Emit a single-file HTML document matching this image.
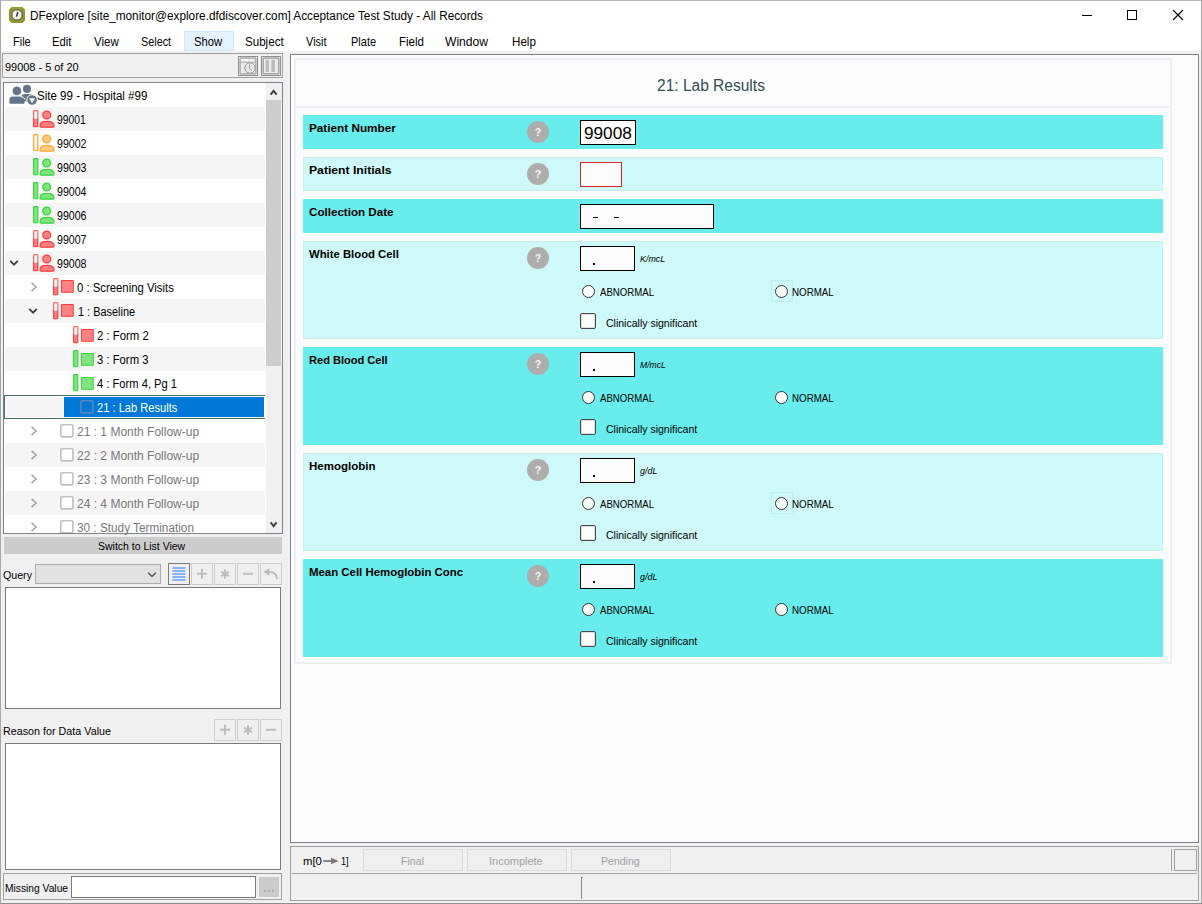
<!DOCTYPE html>
<html><head><meta charset="utf-8"><title>DFexplore</title>
<style>
*{box-sizing:border-box;margin:0;padding:0}
html,body{width:1202px;height:904px;overflow:hidden;background:#f0f0f0}
body{font-family:"Liberation Sans",sans-serif;font-size:12px;color:#000;position:relative}
.a{position:absolute}
.t{position:absolute;white-space:nowrap;display:inline-block;transform-origin:0 50%}
svg{position:absolute;overflow:visible}
.ta{position:absolute;background:#fff;border:1px solid #7a7a7a}
.rowd{position:absolute;left:303px;width:860px;background:#68ecec}
.rowl{position:absolute;left:303px;width:860px;background:#cff8f8;border:1px solid #c4efef}
.help{position:absolute;left:527px;width:22px;height:22px;border-radius:11px;background:#adadad;color:#f4f4f4;font-weight:700;font-size:10.5px;line-height:23.5px;text-align:center}
.nb{position:absolute;left:580px;width:55px;height:25px;background:#fcfcfc;border:1px solid #000}
.dot{position:absolute;left:593px;width:2px;height:2px;background:#000}
.rad{position:absolute;width:13px;height:13px;border-radius:7px;border:1px solid #333;background:#fcfcfc}
.cb{position:absolute;left:580px;width:16px;height:16px;border:1px solid #4a4a4a;border-radius:2px;background:#fcfcfc;box-shadow:inset 0 0 0 1px #dcdcdc}

.gb{position:absolute;width:22px;height:22px;border:1px solid #cecece;background:#efefef}
.sb{position:absolute;top:849px;height:22px;border:1px solid #dcdcdc;background:#efefef}
.alt{position:absolute;left:5px;width:260px;height:24px;background:#f5f5f5}

</style></head><body>
<div class="a" style="left:0px;top:0px;width:1202px;height:30px;background:#fff"></div>
<div class="a" style="left:0px;top:30px;width:1202px;height:21px;background:#fff"></div>
<svg style="left:9px;top:7px" width="16" height="16" viewBox="0 0 16 16"><path d="M2.4 0 H13.6 L16 2.4 V13.6 L13.6 16 H2.4 L0 13.6 V2.4 Z" fill="#95952a" stroke="#95952a" stroke-width="1.2" stroke-linejoin="round" transform="translate(0.6 0.6) scale(0.925)"/><path d="M3.2 1.2 H12.8" stroke="#a9a948" stroke-width="1"/><circle cx="8" cy="7.9" r="5.3" fill="#f4f3de" stroke="#3c4768" stroke-width="0.9"/><g fill="#55608a"><circle cx="8" cy="3.5" r="0.5"/><circle cx="8" cy="12.3" r="0.5"/><circle cx="3.6" cy="7.9" r="0.5"/><circle cx="12.4" cy="7.9" r="0.5"/><circle cx="4.9" cy="4.8" r="0.4"/><circle cx="11.1" cy="4.8" r="0.4"/><circle cx="4.9" cy="11" r="0.4"/><circle cx="11.1" cy="11" r="0.4"/></g><path d="M8.9 5 L7.5 9.6" stroke="#2a3350" stroke-width="1.5" fill="none"/></svg>
<svg style="left:1080px;top:5px" width="110" height="20" viewBox="0 0 110 20" fill="none" stroke="#000" stroke-width="1"><path d="M2 10.5 H12"/><rect x="47.5" y="5.5" width="9" height="9"/><path d="M93 5 L103 15 M103 5 L93 15" stroke-width="1.1"/></svg>
<div class="a" style="left:184px;top:31px;width:50px;height:20px;background:#e5f3ff;border:1px solid #cce8ff"></div>
<div class="a" style="left:2px;top:53px;width:281px;height:25px;border:1px solid #a0a0a0;background:#f0f0f0"></div>
<svg style="left:238px;top:56px" width="20" height="20" viewBox="0 0 20 20">
<rect x="0.5" y="0.5" width="19" height="19" fill="#c6c6c6" stroke="#8f8f8f"/>
<rect x="2.5" y="2.5" width="15" height="15" fill="#ececec" stroke="#b4b4b4"/>
<path d="M3 3.8 H5 M6.8 3.8 H10 M11.8 3.8 H15" stroke="#fff" stroke-width="1.4"/>
<path d="M2 6.2 H18" stroke="#a8a8a8" stroke-width="1"/>
<circle cx="12" cy="12" r="5.2" fill="#e6e6e6" stroke="#9a9a9a" stroke-width="1"/>
<path d="M11.6 8.6 V12.4 L14 14.6" stroke="#9a9a9a" stroke-width="1" fill="none"/>
<rect x="1" y="1" width="1" height="1" fill="#fff"/><rect x="18" y="1" width="1" height="1" fill="#fff"/><rect x="1" y="18" width="1" height="1" fill="#fff"/><rect x="18" y="18" width="1" height="1" fill="#fff"/>
</svg>
<svg style="left:261px;top:56px" width="20" height="20" viewBox="0 0 20 20">
<rect x="0.5" y="0.5" width="19" height="19" fill="#c6c6c6" stroke="#8f8f8f"/>
<rect x="2.5" y="2.5" width="15" height="15" fill="#ececec" stroke="#a8a8a8"/>
<rect x="4.6" y="4" width="3.4" height="12" fill="#bcbcbc"/>
<rect x="10.4" y="4" width="3.6" height="12" fill="#bcbcbc"/>
<rect x="1" y="1" width="1" height="1" fill="#fff"/><rect x="18" y="1" width="1" height="1" fill="#fff"/><rect x="1" y="18" width="1" height="1" fill="#fff"/><rect x="18" y="18" width="1" height="1" fill="#fff"/>
</svg>
<div class="a" style="left:3px;top:82px;width:280px;height:452px;border:1px solid #7c838d;background:#fff"></div>
<div class="alt" style="top:107px;height:24px"></div>
<div class="alt" style="top:155px;height:24px"></div>
<div class="alt" style="top:203px;height:24px"></div>
<div class="alt" style="top:251px;height:24px"></div>
<div class="alt" style="top:299px;height:24px"></div>
<div class="alt" style="top:347px;height:24px"></div>
<div class="alt" style="top:395px;height:24px"></div>
<div class="alt" style="top:443px;height:24px"></div>
<div class="alt" style="top:491px;height:24px"></div>
<div class="a" style="left:4px;top:395px;width:261px;height:24px;background:#fff;border:1px solid #466e6e;border-right:none"></div>
<div class="a" style="left:6px;top:397px;width:57px;height:20px;background:#f5f5f5"></div>
<div class="a" style="left:64px;top:397px;width:200px;height:20px;background:#0078d7"></div>
<div class="a" style="left:266px;top:83px;width:16px;height:450px;background:#f0f0f0"></div>
<div class="a" style="left:266px;top:100px;width:15px;height:266px;background:#cdcdcd"></div>
<svg style="left:266px;top:83px" width="16" height="17" viewBox="0 0 16 17"><path d="M4.6 11.6 L7.6 7.8 L10.6 11.6" stroke="#404040" stroke-width="2" fill="none"/></svg>
<svg style="left:266px;top:516px" width="16" height="17" viewBox="0 0 16 17"><path d="M4.6 6.4 L7.6 10.2 L10.6 6.4" stroke="#404040" stroke-width="2" fill="none"/></svg>
<svg style="left:9px;top:84px" width="29" height="22" viewBox="0 0 29 22" fill="#64758a">
<circle cx="18" cy="4.9" r="4.05"/>
<path d="M12 12.4 Q13 10.1 16 10.1 H21 Q22.6 10.2 23.4 11 L18.4 17.4 H15 Z"/>
<path d="M11 11.2 L16.6 15.4" stroke="#fff" stroke-width="1" fill="none"/>
<circle cx="7.9" cy="6.95" r="4.4"/>
<path d="M0.4 19 V16 Q0.4 12.6 3.8 12.6 H11.2 L15.4 15.7 V19 Q15.4 19.7 14.7 19.7 H1.1 Q0.4 19.7 0.4 19 Z"/>
<circle cx="23.1" cy="16" r="5.7" fill="#fff"/>
<circle cx="23.1" cy="16" r="4.85"/>
<path d="M20.1 14.2 H26.1 L23.1 19.2 Z" fill="#fff"/>
</svg>
<svg style="left:33.3px;top:110.3px" width="5.4" height="17.4" viewBox="0 0 5.4 17.4"><rect x="0.6" y="0.6" width="4.2" height="16.2" rx="0.9" fill="#ff8282" stroke="#ff3a3a" stroke-width="1.15"/><rect x="1.5" y="1.5" width="2.4" height="7.4" fill="#fff" fill-opacity="0.95"/><rect x="0.3" y="0.3" width="4.8" height="8" rx="1" fill="#fff" fill-opacity="0.35"/></svg>
<svg style="left:39.4px;top:110.0px" width="16" height="18" viewBox="0 0 16 18"><circle cx="7.7" cy="4.95" r="3.95" fill="#ff8282" stroke="#ff3a3a" stroke-width="1.25"/><path d="M1 16 C1 12.4 3.6 11.3 8 11.3 C12.4 11.3 15 12.4 15 16 Q15 17.15 13.9 17.15 H2.1 Q1 17.15 1 16 Z" fill="#ff8282" stroke="#ff3a3a" stroke-width="1.25"/></svg>
<svg style="left:33.3px;top:134.3px" width="5.4" height="17.4" viewBox="0 0 5.4 17.4"><rect x="0.6" y="0.6" width="4.2" height="16.2" rx="0.9" fill="#ffcb80" stroke="#ffa630" stroke-width="1.15"/><rect x="1.5" y="1.5" width="2.4" height="14.4" fill="#fff" fill-opacity="0.95"/></svg>
<svg style="left:39.4px;top:134.0px" width="16" height="18" viewBox="0 0 16 18"><circle cx="7.7" cy="4.95" r="3.95" fill="#ffcb80" stroke="#ffa630" stroke-width="1.25"/><path d="M1 16 C1 12.4 3.6 11.3 8 11.3 C12.4 11.3 15 12.4 15 16 Q15 17.15 13.9 17.15 H2.1 Q1 17.15 1 16 Z" fill="#ffcb80" stroke="#ffa630" stroke-width="1.25"/></svg>
<svg style="left:33.3px;top:158.3px" width="5.4" height="17.4" viewBox="0 0 5.4 17.4"><rect x="0.6" y="0.6" width="4.2" height="16.2" rx="0.9" fill="#80e280" stroke="#36d836" stroke-width="1.15"/></svg>
<svg style="left:39.4px;top:158.0px" width="16" height="18" viewBox="0 0 16 18"><circle cx="7.7" cy="4.95" r="3.95" fill="#80e280" stroke="#36d836" stroke-width="1.25"/><path d="M1 16 C1 12.4 3.6 11.3 8 11.3 C12.4 11.3 15 12.4 15 16 Q15 17.15 13.9 17.15 H2.1 Q1 17.15 1 16 Z" fill="#80e280" stroke="#36d836" stroke-width="1.25"/></svg>
<svg style="left:33.3px;top:182.3px" width="5.4" height="17.4" viewBox="0 0 5.4 17.4"><rect x="0.6" y="0.6" width="4.2" height="16.2" rx="0.9" fill="#80e280" stroke="#36d836" stroke-width="1.15"/></svg>
<svg style="left:39.4px;top:182.0px" width="16" height="18" viewBox="0 0 16 18"><circle cx="7.7" cy="4.95" r="3.95" fill="#80e280" stroke="#36d836" stroke-width="1.25"/><path d="M1 16 C1 12.4 3.6 11.3 8 11.3 C12.4 11.3 15 12.4 15 16 Q15 17.15 13.9 17.15 H2.1 Q1 17.15 1 16 Z" fill="#80e280" stroke="#36d836" stroke-width="1.25"/></svg>
<svg style="left:33.3px;top:206.3px" width="5.4" height="17.4" viewBox="0 0 5.4 17.4"><rect x="0.6" y="0.6" width="4.2" height="16.2" rx="0.9" fill="#80e280" stroke="#36d836" stroke-width="1.15"/></svg>
<svg style="left:39.4px;top:206.0px" width="16" height="18" viewBox="0 0 16 18"><circle cx="7.7" cy="4.95" r="3.95" fill="#80e280" stroke="#36d836" stroke-width="1.25"/><path d="M1 16 C1 12.4 3.6 11.3 8 11.3 C12.4 11.3 15 12.4 15 16 Q15 17.15 13.9 17.15 H2.1 Q1 17.15 1 16 Z" fill="#80e280" stroke="#36d836" stroke-width="1.25"/></svg>
<svg style="left:33.3px;top:230.3px" width="5.4" height="17.4" viewBox="0 0 5.4 17.4"><rect x="0.6" y="0.6" width="4.2" height="16.2" rx="0.9" fill="#ff8282" stroke="#ff3a3a" stroke-width="1.15"/><rect x="1.5" y="1.5" width="2.4" height="7.4" fill="#fff" fill-opacity="0.95"/><rect x="0.3" y="0.3" width="4.8" height="8" rx="1" fill="#fff" fill-opacity="0.35"/></svg>
<svg style="left:39.4px;top:230.0px" width="16" height="18" viewBox="0 0 16 18"><circle cx="7.7" cy="4.95" r="3.95" fill="#ff8282" stroke="#ff3a3a" stroke-width="1.25"/><path d="M1 16 C1 12.4 3.6 11.3 8 11.3 C12.4 11.3 15 12.4 15 16 Q15 17.15 13.9 17.15 H2.1 Q1 17.15 1 16 Z" fill="#ff8282" stroke="#ff3a3a" stroke-width="1.25"/></svg>
<svg style="left:33.3px;top:254.3px" width="5.4" height="17.4" viewBox="0 0 5.4 17.4"><rect x="0.6" y="0.6" width="4.2" height="16.2" rx="0.9" fill="#ff8282" stroke="#ff3a3a" stroke-width="1.15"/><rect x="1.5" y="1.5" width="2.4" height="7.4" fill="#fff" fill-opacity="0.95"/><rect x="0.3" y="0.3" width="4.8" height="8" rx="1" fill="#fff" fill-opacity="0.35"/></svg>
<svg style="left:39.4px;top:254.0px" width="16" height="18" viewBox="0 0 16 18"><circle cx="7.7" cy="4.95" r="3.95" fill="#ff8282" stroke="#ff3a3a" stroke-width="1.25"/><path d="M1 16 C1 12.4 3.6 11.3 8 11.3 C12.4 11.3 15 12.4 15 16 Q15 17.15 13.9 17.15 H2.1 Q1 17.15 1 16 Z" fill="#ff8282" stroke="#ff3a3a" stroke-width="1.25"/></svg>
<svg style="left:53.3px;top:278.3px" width="5.4" height="17.4" viewBox="0 0 5.4 17.4"><rect x="0.6" y="0.6" width="4.2" height="16.2" rx="0.9" fill="#ff8282" stroke="#ff3a3a" stroke-width="1.15"/><rect x="1.5" y="1.5" width="2.4" height="7.4" fill="#fff" fill-opacity="0.95"/><rect x="0.3" y="0.3" width="4.8" height="8" rx="1" fill="#fff" fill-opacity="0.35"/></svg>
<svg style="left:60.5px;top:280.4px" width="13" height="13" viewBox="0 0 13 13"><rect x="0.5" y="0.5" width="11.8" height="11.8" rx="0.15" fill="#ff8282" stroke="#ff3a3a" stroke-width="1"/></svg>
<svg style="left:53.3px;top:302.3px" width="5.4" height="17.4" viewBox="0 0 5.4 17.4"><rect x="0.6" y="0.6" width="4.2" height="16.2" rx="0.9" fill="#ff8282" stroke="#ff3a3a" stroke-width="1.15"/><rect x="1.5" y="1.5" width="2.4" height="7.4" fill="#fff" fill-opacity="0.95"/><rect x="0.3" y="0.3" width="4.8" height="8" rx="1" fill="#fff" fill-opacity="0.35"/></svg>
<svg style="left:60.5px;top:304.4px" width="13" height="13" viewBox="0 0 13 13"><rect x="0.5" y="0.5" width="11.8" height="11.8" rx="0.15" fill="#ff8282" stroke="#ff3a3a" stroke-width="1"/></svg>
<svg style="left:73.3px;top:326.3px" width="5.4" height="17.4" viewBox="0 0 5.4 17.4"><rect x="0.6" y="0.6" width="4.2" height="16.2" rx="0.9" fill="#ff8282" stroke="#ff3a3a" stroke-width="1.15"/><rect x="1.5" y="1.5" width="2.4" height="7.4" fill="#fff" fill-opacity="0.95"/><rect x="0.3" y="0.3" width="4.8" height="8" rx="1" fill="#fff" fill-opacity="0.35"/></svg>
<svg style="left:80.6px;top:328.6px" width="13" height="13" viewBox="0 0 13 13"><rect x="0.5" y="0.5" width="11.8" height="11.8" rx="0.15" fill="#ff8282" stroke="#ff3a3a" stroke-width="1"/></svg>
<svg style="left:73.3px;top:350.3px" width="5.4" height="17.4" viewBox="0 0 5.4 17.4"><rect x="0.6" y="0.6" width="4.2" height="16.2" rx="0.9" fill="#80e280" stroke="#36d836" stroke-width="1.15"/></svg>
<svg style="left:80.6px;top:352.6px" width="13" height="13" viewBox="0 0 13 13"><rect x="0.5" y="0.5" width="11.8" height="11.8" rx="0.15" fill="#80e280" stroke="#36d836" stroke-width="1"/></svg>
<svg style="left:73.3px;top:374.3px" width="5.4" height="17.4" viewBox="0 0 5.4 17.4"><rect x="0.6" y="0.6" width="4.2" height="16.2" rx="0.9" fill="#80e280" stroke="#36d836" stroke-width="1.15"/></svg>
<svg style="left:80.6px;top:376.6px" width="13" height="13" viewBox="0 0 13 13"><rect x="0.5" y="0.5" width="11.8" height="11.8" rx="0.15" fill="#80e280" stroke="#36d836" stroke-width="1"/></svg>
<svg style="left:80.1px;top:400.1px" width="14" height="14" viewBox="0 0 14 14"><rect x="0.8" y="0.8" width="12.1" height="12.1" rx="1.3" fill="none" stroke="#5a86b6" stroke-width="1.6"/></svg>
<svg style="left:60.2px;top:424.0px" width="14" height="14" viewBox="0 0 14 14"><rect x="0.8" y="0.8" width="12.1" height="12.1" rx="1.3" fill="#fff" stroke="#bfbfbf" stroke-width="1.6"/></svg>
<svg style="left:60.2px;top:448.0px" width="14" height="14" viewBox="0 0 14 14"><rect x="0.8" y="0.8" width="12.1" height="12.1" rx="1.3" fill="#fff" stroke="#bfbfbf" stroke-width="1.6"/></svg>
<svg style="left:60.2px;top:472.0px" width="14" height="14" viewBox="0 0 14 14"><rect x="0.8" y="0.8" width="12.1" height="12.1" rx="1.3" fill="#fff" stroke="#bfbfbf" stroke-width="1.6"/></svg>
<svg style="left:60.2px;top:496.0px" width="14" height="14" viewBox="0 0 14 14"><rect x="0.8" y="0.8" width="12.1" height="12.1" rx="1.3" fill="#fff" stroke="#bfbfbf" stroke-width="1.6"/></svg>
<svg style="left:60.2px;top:520.0px" width="14" height="14" viewBox="0 0 14 14"><rect x="0.8" y="0.8" width="12.1" height="12.1" rx="1.3" fill="#fff" stroke="#bfbfbf" stroke-width="1.6"/></svg>
<svg style="left:7.6px;top:259.2px" width="12" height="8" viewBox="0 0 12 8"><path d="M2.2 1.8 L6 5.6 L9.8 1.8" stroke="#404040" stroke-width="1.9" fill="none"/></svg>
<svg style="left:30px;top:281.3px" width="8" height="12" viewBox="0 0 8 12"><path d="M1.6 1.8 L6 6 L1.6 10.2" stroke="#a6a6a6" stroke-width="1.6" fill="none"/></svg>
<svg style="left:27.299999999999997px;top:307.0px" width="12" height="8" viewBox="0 0 12 8"><path d="M2.2 1.8 L6 5.6 L9.8 1.8" stroke="#404040" stroke-width="1.9" fill="none"/></svg>
<svg style="left:30px;top:425.3px" width="8" height="12" viewBox="0 0 8 12"><path d="M1.6 1.8 L6 6 L1.6 10.2" stroke="#a6a6a6" stroke-width="1.6" fill="none"/></svg>
<svg style="left:30px;top:449.3px" width="8" height="12" viewBox="0 0 8 12"><path d="M1.6 1.8 L6 6 L1.6 10.2" stroke="#a6a6a6" stroke-width="1.6" fill="none"/></svg>
<svg style="left:30px;top:473.3px" width="8" height="12" viewBox="0 0 8 12"><path d="M1.6 1.8 L6 6 L1.6 10.2" stroke="#a6a6a6" stroke-width="1.6" fill="none"/></svg>
<svg style="left:30px;top:497.3px" width="8" height="12" viewBox="0 0 8 12"><path d="M1.6 1.8 L6 6 L1.6 10.2" stroke="#a6a6a6" stroke-width="1.6" fill="none"/></svg>
<svg style="left:30px;top:521.3px" width="8" height="12" viewBox="0 0 8 12"><path d="M1.6 1.8 L6 6 L1.6 10.2" stroke="#a6a6a6" stroke-width="1.6" fill="none"/></svg>
<div class="a" style="left:4px;top:533px;width:278px;height:1px;background:#7c838d"></div>
<div class="a" style="left:3px;top:534px;width:281px;height:3px;background:#f0f0f0"></div>
<div class="a" style="left:4px;top:537px;width:278px;height:17px;background:#cccccc"></div>
<div class="a" style="left:35px;top:564px;width:126px;height:20px;background:#e1e1e1;border:1px solid #adadad"></div>
<svg style="left:146px;top:570px" width="12" height="8" viewBox="0 0 12 8"><path d="M2.2 2.7 L6 6.4 L9.8 2.7" stroke="#404040" stroke-width="1.2" fill="none"/></svg>
<div class="a" style="left:168px;top:563px;width:22px;height:22px;border:1px solid #7a7a7a;background:#efefef"></div>
<svg style="left:168px;top:563px" width="22" height="22" viewBox="0 0 22 22"><path d="M4.5 5 H17.5 M4.5 8 H17.5 M4.5 11 H17.5 M4.5 14 H17.5 M4.5 17 H17.5" stroke="#86b4ff" stroke-width="1.9"/></svg>
<div class="gb" style="left:191px;top:563px"></div>
<svg style="left:191px;top:563px" width="22" height="22" viewBox="0 0 22 22"><path d="M6 10.8 H16 M11 5.8 V15.8" stroke="#bdbdbd" stroke-width="2"/></svg>
<div class="gb" style="left:214px;top:563px"></div>
<svg style="left:214px;top:563px" width="22" height="22" viewBox="0 0 22 22"><path d="M11 6.2 V15.6 M7.2 8.6 L14.8 13.2 M14.8 8.6 L7.2 13.2" stroke="#bdbdbd" stroke-width="2"/></svg>
<div class="gb" style="left:237px;top:563px"></div>
<svg style="left:237px;top:563px" width="22" height="22" viewBox="0 0 22 22"><path d="M6 10.8 H16" stroke="#bdbdbd" stroke-width="2"/></svg>
<div class="gb" style="left:260px;top:563px"></div>
<svg style="left:260px;top:563px" width="22" height="22" viewBox="0 0 22 22"><path d="M3.4 9 L9.4 5.2 V12.8 Z" fill="#bdbdbd"/><path d="M9 9 Q16.4 9 17.2 15.8" stroke="#bdbdbd" stroke-width="2.2" fill="none"/></svg>
<div class="ta" style="left:5px;top:587px;width:276px;height:122px"></div>
<div class="gb" style="left:214px;top:719px"></div>
<svg style="left:214px;top:719px" width="22" height="22" viewBox="0 0 22 22"><path d="M6 10.8 H16 M11 5.8 V15.8" stroke="#bdbdbd" stroke-width="2"/></svg>
<div class="gb" style="left:237px;top:719px"></div>
<svg style="left:237px;top:719px" width="22" height="22" viewBox="0 0 22 22"><path d="M11 6.2 V15.6 M7.2 8.6 L14.8 13.2 M14.8 8.6 L7.2 13.2" stroke="#bdbdbd" stroke-width="2"/></svg>
<div class="gb" style="left:260px;top:719px"></div>
<svg style="left:260px;top:719px" width="22" height="22" viewBox="0 0 22 22"><path d="M6 10.8 H16" stroke="#bdbdbd" stroke-width="2"/></svg>
<div class="ta" style="left:5px;top:743px;width:276px;height:127px"></div>
<div class="a" style="left:3px;top:873px;width:279px;height:27px;border:1px solid #a0a0a0"></div>
<div class="a" style="left:71px;top:876px;width:185px;height:22px;border:1px solid #7a7a7a;background:#fff"></div>
<div class="a" style="left:259px;top:877px;width:20px;height:20px;background:#cccccc"></div>
<svg style="left:259px;top:877px" width="20" height="20" viewBox="0 0 20 20" fill="#a0a0a0"><rect x="5" y="13" width="1.6" height="1.6"/><rect x="9" y="13" width="1.6" height="1.6"/><rect x="13" y="13" width="1.6" height="1.6"/></svg>
<div class="a" style="left:290px;top:54px;width:909px;height:789px;border:1px solid #7a828e;background:#fcfcfc"></div>
<div class="a" style="left:294px;top:58px;width:878px;height:606px;border:2px solid #eeeff1"></div>
<div class="a" style="left:296px;top:106px;width:874px;height:2px;background:#eeeff1"></div>
<div class="rowd" style="top:115px;height:34px"></div>
<div class="rowl" style="top:157px;height:34px"></div>
<div class="rowd" style="top:199px;height:34px"></div>
<div class="rowl" style="top:241px;height:98px"></div>
<div class="rowd" style="top:347px;height:98px"></div>
<div class="rowl" style="top:453px;height:98px"></div>
<div class="rowd" style="top:559px;height:98px"></div>
<div class="help" style="top:121px">?</div>
<div class="help" style="top:163px">?</div>
<div class="help" style="top:247px">?</div>
<div class="help" style="top:353px">?</div>
<div class="help" style="top:459px">?</div>
<div class="help" style="top:565px">?</div>
<div class="a" style="left:580px;top:120px;width:56px;height:25px;background:#fcfcfc;border:1px solid #000"></div>
<div class="a" style="left:580px;top:162px;width:42px;height:25px;border:1px solid #dc2626;background:#fcfcfc"></div>
<div class="a" style="left:580px;top:204px;width:134px;height:25px;background:#fcfcfc;border:1px solid #000"></div>
<div class="a" style="left:592.5px;top:216.6px;width:5.5px;height:1.5px;background:#000"></div>
<div class="a" style="left:613.7px;top:216.6px;width:5.5px;height:1.5px;background:#000"></div>
<div class="nb" style="top:246px"></div>
<div class="dot" style="top:263px"></div>
<div class="a" style="left:771px;top:280px;width:22px;height:22px;border:1px solid #b8f0f0"></div>
<div class="rad" style="left:582px;top:284.7px"></div>
<div class="rad" style="left:775px;top:284.7px"></div>
<div class="cb" style="top:313px"></div>
<div class="nb" style="top:352px"></div>
<div class="dot" style="top:369px"></div>
<div class="rad" style="left:582px;top:390.7px"></div>
<div class="rad" style="left:775px;top:390.7px"></div>
<div class="cb" style="top:419px"></div>
<div class="nb" style="top:458px"></div>
<div class="dot" style="top:475px"></div>
<div class="a" style="left:771px;top:492px;width:22px;height:22px;border:1px solid #b8f0f0"></div>
<div class="rad" style="left:582px;top:496.7px"></div>
<div class="rad" style="left:775px;top:496.7px"></div>
<div class="cb" style="top:525px"></div>
<div class="nb" style="top:564px"></div>
<div class="dot" style="top:581px"></div>
<div class="rad" style="left:582px;top:602.7px"></div>
<div class="rad" style="left:775px;top:602.7px"></div>
<div class="cb" style="top:631px"></div>
<div class="a" style="left:290px;top:846px;width:909px;height:55px;border:1px solid #a0a0a0;background:#f0f0f0"></div>
<div class="sb" style="left:363px;width:100px"></div>
<div class="sb" style="left:467px;width:100px"></div>
<div class="sb" style="left:571px;width:100px"></div>
<svg style="left:322px;top:856px" width="18" height="10" viewBox="0 0 18 10"><path d="M1.3 5 H11" stroke="#7a7a7a" stroke-width="1.8"/><path d="M9 1.8 L16.6 5 L9 8.2 Z" fill="#7a7a7a"/></svg>
<div class="a" style="left:292px;top:873px;width:905px;height:1px;background:#a0a0a0"></div>
<div class="a" style="left:581px;top:877px;width:1px;height:22px;background:#8c8c8c"></div>
<div class="a" style="left:581px;top:877px;width:2px;height:1px;background:#8c8c8c"></div>
<div class="a" style="left:1171px;top:849px;width:1px;height:22px;background:#a0a0a0"></div>
<div class="a" style="left:1174px;top:849px;width:23px;height:22px;border:1px solid #a0a0a0;background:#efefef"></div>
<div class="a" style="left:0px;top:0px;width:1202px;height:904px;border:1px solid #a6a6a6;border-top-color:#b8b8b8;border-bottom-color:#8e8e8e;pointer-events:none"></div>
<span class="t" style="left:30.4px;top:8.04px;font-size:12px;line-height:16px;transform:scaleX(0.9816)">DFexplore [site_monitor@explore.dfdiscover.com] Acceptance Test Study - All Records</span>
<span class="t" style="left:12.5px;top:33.84px;font-size:12px;line-height:16px;transform:scaleX(0.9155)">File</span>
<span class="t" style="left:52.4px;top:33.84px;font-size:12px;line-height:16px;transform:scaleX(0.9370)">Edit</span>
<span class="t" style="left:94.0px;top:33.84px;font-size:12px;line-height:16px;transform:scaleX(0.9569)">View</span>
<span class="t" style="left:141.0px;top:33.84px;font-size:12px;line-height:16px;transform:scaleX(0.9025)">Select</span>
<span class="t" style="left:194.2px;top:33.84px;font-size:12px;line-height:16px;transform:scaleX(0.9357)">Show</span>
<span class="t" style="left:245.0px;top:33.84px;font-size:12px;line-height:16px;transform:scaleX(0.9658)">Subject</span>
<span class="t" style="left:306.2px;top:33.84px;font-size:12px;line-height:16px;transform:scaleX(0.9170)">Visit</span>
<span class="t" style="left:350.6px;top:33.84px;font-size:12px;line-height:16px;transform:scaleX(0.9177)">Plate</span>
<span class="t" style="left:398.5px;top:33.84px;font-size:12px;line-height:16px;transform:scaleX(0.9552)">Field</span>
<span class="t" style="left:445.2px;top:33.84px;font-size:12px;line-height:16px;transform:scaleX(1.0090)">Window</span>
<span class="t" style="left:511.6px;top:33.84px;font-size:12px;line-height:16px;transform:scaleX(0.9678)">Help</span>
<span class="t" style="left:4.8px;top:59.82px;font-size:11.5px;line-height:15px;transform:scaleX(0.9510)">99008 - 5 of 20</span>
<span class="t" style="left:37.3px;top:87.74px;font-size:12.3px;line-height:16px;transform:scaleX(0.9386)">Site 99 - Hospital #99</span>
<span class="t" style="left:57.3px;top:111.74px;font-size:12.3px;line-height:16px;transform:scaleX(0.8383)">99001</span>
<span class="t" style="left:57.3px;top:135.74px;font-size:12.3px;line-height:16px;transform:scaleX(0.8616)">99002</span>
<span class="t" style="left:57.3px;top:159.74px;font-size:12.3px;line-height:16px;transform:scaleX(0.8616)">99003</span>
<span class="t" style="left:57.3px;top:183.74px;font-size:12.3px;line-height:16px;transform:scaleX(0.8616)">99004</span>
<span class="t" style="left:57.3px;top:207.74px;font-size:12.3px;line-height:16px;transform:scaleX(0.8616)">99006</span>
<span class="t" style="left:57.3px;top:231.74px;font-size:12.3px;line-height:16px;transform:scaleX(0.8616)">99007</span>
<span class="t" style="left:57.3px;top:255.74px;font-size:12.3px;line-height:16px;transform:scaleX(0.8616)">99008</span>
<span class="t" style="left:77.2px;top:279.74px;font-size:12.3px;line-height:16px;transform:scaleX(0.9220)">0 : Screening Visits</span>
<span class="t" style="left:77.9px;top:303.74px;font-size:12.3px;line-height:16px;transform:scaleX(0.8879)">1 : Baseline</span>
<span class="t" style="left:97.0px;top:327.74px;font-size:12.3px;line-height:16px;transform:scaleX(0.9236)">2 : Form 2</span>
<span class="t" style="left:97.0px;top:351.74px;font-size:12.3px;line-height:16px;transform:scaleX(0.9183)">3 : Form 3</span>
<span class="t" style="left:97.0px;top:375.74px;font-size:12.3px;line-height:16px;transform:scaleX(0.9080)">4 : Form 4, Pg 1</span>
<span class="t" style="left:97.0px;top:399.74px;font-size:12.3px;line-height:16px;transform:scaleX(0.9040);color:#fff">21 : Lab Results</span>
<span class="t" style="left:77.2px;top:423.74px;font-size:12.3px;line-height:16px;transform:scaleX(0.9765);color:#787878">21 : 1 Month Follow-up</span>
<span class="t" style="left:77.2px;top:447.74px;font-size:12.3px;line-height:16px;transform:scaleX(0.9765);color:#787878">22 : 2 Month Follow-up</span>
<span class="t" style="left:77.2px;top:471.74px;font-size:12.3px;line-height:16px;transform:scaleX(0.9765);color:#787878">23 : 3 Month Follow-up</span>
<span class="t" style="left:77.2px;top:495.74px;font-size:12.3px;line-height:16px;transform:scaleX(0.9765);color:#787878">24 : 4 Month Follow-up</span>
<span class="t" style="left:77.2px;top:519.74px;font-size:12.3px;line-height:16px;transform:scaleX(0.9575);color:#787878">30 : Study Termination</span>
<span class="t" style="left:98.2px;top:538.52px;font-size:11.5px;line-height:15px;transform:scaleX(0.9112)">Switch to List View</span>
<span class="t" style="left:3.4px;top:567.62px;font-size:11.5px;line-height:15px;transform:scaleX(0.9250)">Query</span>
<span class="t" style="left:3.4px;top:723.52px;font-size:11.5px;line-height:15px;transform:scaleX(0.9349)">Reason for Data Value</span>
<span class="t" style="left:5.3px;top:880.92px;font-size:11.5px;line-height:15px;transform:scaleX(0.8914)">Missing Value</span>
<span class="t" style="left:656.9px;top:75.36px;font-size:16px;line-height:21px;transform:scaleX(0.9705);color:#2f4f4f">21: Lab Results</span>
<span class="t" style="left:309.2px;top:121.19px;font-size:11px;line-height:14px;transform:scaleX(1.0682);font-weight:700">Patient Number</span>
<span class="t" style="left:309.2px;top:163.19px;font-size:11px;line-height:14px;transform:scaleX(1.1067);font-weight:700">Patient Initials</span>
<span class="t" style="left:309.2px;top:205.19px;font-size:11px;line-height:14px;transform:scaleX(1.0557);font-weight:700">Collection Date</span>
<span class="t" style="left:309.2px;top:247.19px;font-size:11px;line-height:14px;transform:scaleX(1.0283);font-weight:700">White Blood Cell</span>
<span class="t" style="left:309.2px;top:353.19px;font-size:11px;line-height:14px;transform:scaleX(1.0055);font-weight:700">Red Blood Cell</span>
<span class="t" style="left:309.2px;top:459.19px;font-size:11px;line-height:14px;transform:scaleX(1.0449);font-weight:700">Hemoglobin</span>
<span class="t" style="left:309.2px;top:565.19px;font-size:11px;line-height:14px;transform:scaleX(1.0378);font-weight:700">Mean Cell Hemoglobin Conc</span>
<span class="t" style="left:583.7px;top:122.66px;font-size:16px;line-height:21px;transform:scaleX(1.0741)">99008</span>
<span class="t" style="left:639.9px;top:252.71px;font-size:9.5px;line-height:12px;transform:scaleX(0.9347);font-style:italic">K/mcL</span>
<span class="t" style="left:600.0px;top:285.09px;font-size:11px;line-height:14px;transform:scaleX(0.8747)">ABNORMAL</span>
<span class="t" style="left:792.1px;top:285.09px;font-size:11px;line-height:14px;transform:scaleX(0.8883)">NORMAL</span>
<span class="t" style="left:605.7px;top:316.29px;font-size:11px;line-height:14px;transform:scaleX(0.9558)">Clinically significant</span>
<span class="t" style="left:639.9px;top:358.71px;font-size:9.5px;line-height:12px;transform:scaleX(0.9073);font-style:italic">M/mcL</span>
<span class="t" style="left:600.0px;top:391.09px;font-size:11px;line-height:14px;transform:scaleX(0.8747)">ABNORMAL</span>
<span class="t" style="left:792.1px;top:391.09px;font-size:11px;line-height:14px;transform:scaleX(0.8883)">NORMAL</span>
<span class="t" style="left:605.7px;top:422.29px;font-size:11px;line-height:14px;transform:scaleX(0.9558)">Clinically significant</span>
<span class="t" style="left:639.9px;top:464.71px;font-size:9.5px;line-height:12px;transform:scaleX(0.9392);font-style:italic">g/dL</span>
<span class="t" style="left:600.0px;top:497.09px;font-size:11px;line-height:14px;transform:scaleX(0.8747)">ABNORMAL</span>
<span class="t" style="left:792.1px;top:497.09px;font-size:11px;line-height:14px;transform:scaleX(0.8883)">NORMAL</span>
<span class="t" style="left:605.7px;top:528.29px;font-size:11px;line-height:14px;transform:scaleX(0.9558)">Clinically significant</span>
<span class="t" style="left:639.9px;top:570.71px;font-size:9.5px;line-height:12px;transform:scaleX(0.9392);font-style:italic">g/dL</span>
<span class="t" style="left:600.0px;top:603.09px;font-size:11px;line-height:14px;transform:scaleX(0.8747)">ABNORMAL</span>
<span class="t" style="left:792.1px;top:603.09px;font-size:11px;line-height:14px;transform:scaleX(0.8883)">NORMAL</span>
<span class="t" style="left:605.7px;top:634.29px;font-size:11px;line-height:14px;transform:scaleX(0.9558)">Clinically significant</span>
<span class="t" style="left:303.2px;top:853.52px;font-size:11.5px;line-height:15px;transform:scaleX(0.9854)">m[0</span>
<span class="t" style="left:341.3px;top:853.52px;font-size:11.5px;line-height:15px;transform:scaleX(0.7876)">1]</span>
<span class="t" style="left:401.0px;top:853.52px;font-size:11.5px;line-height:15px;transform:scaleX(0.9232);color:#a0a0a0">Final</span>
<span class="t" style="left:488.6px;top:853.52px;font-size:11.5px;line-height:15px;transform:scaleX(0.9552);color:#a0a0a0">Incomplete</span>
<span class="t" style="left:601.1px;top:853.52px;font-size:11.5px;line-height:15px;transform:scaleX(0.9161);color:#a0a0a0">Pending</span>
</body></html>
